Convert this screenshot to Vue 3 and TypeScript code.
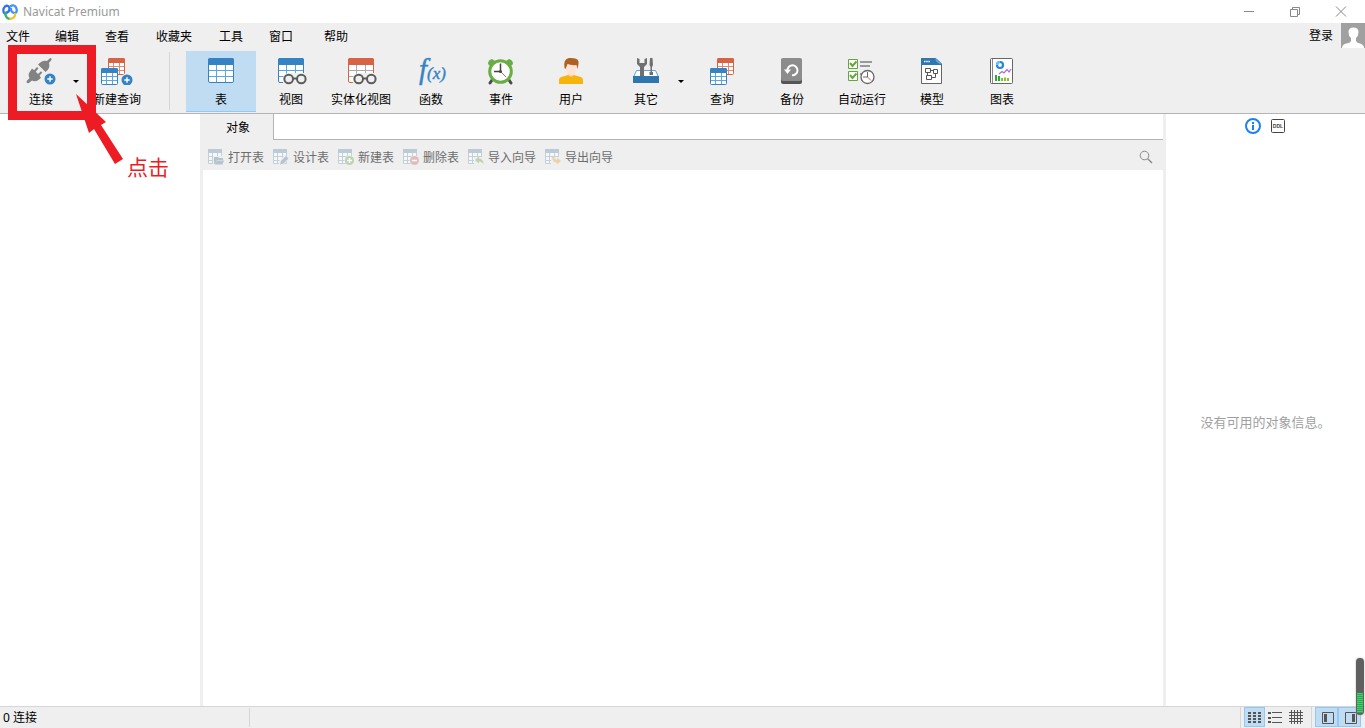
<script setup lang="ts">
import { ref } from 'vue'

interface Tool {
  id: string
  label: string
  more?: boolean
}

const menus: string[] = ['文件', '编辑', '查看', '收藏夹', '工具', '窗口', '帮助']

const createTools: Tool[] = [
  { id: 'connect', label: '连接', more: true },
  { id: 'new-query', label: '新建查询' },
]

const objectTools: Tool[] = [
  { id: 'table', label: '表' },
  { id: 'view', label: '视图' },
  { id: 'mat-view', label: '实体化视图' },
  { id: 'function', label: '函数' },
  { id: 'event', label: '事件' },
  { id: 'user', label: '用户' },
  { id: 'others', label: '其它', more: true },
  { id: 'query', label: '查询' },
  { id: 'backup', label: '备份' },
  { id: 'automation', label: '自动运行' },
  { id: 'model', label: '模型' },
  { id: 'chart', label: '图表' },
]

const actions: Tool[] = [
  { id: 'open', label: '打开表' },
  { id: 'design', label: '设计表' },
  { id: 'add', label: '新建表' },
  { id: 'remove', label: '删除表' },
  { id: 'import', label: '导入向导' },
  { id: 'export', label: '导出向导' },
]

const active = ref('table')
const layout = ref('small')
const leftPane = ref(true)
const rightPane = ref(true)
</script>

<template>
  <div class="window">
    <svg class="defs" aria-hidden="true">
      <symbol id="sheet" viewBox="0 0 26 25">
        <rect x="0.5" y="0.5" width="25" height="24" rx="1.5" fill="#fff" stroke="currentColor" />
        <path d="M0 7V2Q0 0 2 0H24Q26 0 26 2V7Z" fill="currentColor" />
        <path d="M1 12.5H25M1 18.5H25M8.5 7V24M17.5 7V24" stroke="var(--grid)" fill="none" />
      </symbol>
      <symbol id="mini-sheet" viewBox="0 0 17 17">
        <rect x="0.5" y="0.5" width="16" height="16" rx="1" fill="#fff" stroke="currentColor" />
        <path d="M0 5V1.5Q0 0 1.5 0H15.5Q17 0 17 1.5V5Z" fill="currentColor" />
        <path d="M1 8.5H16M1 12.5H16M5.5 5V16M11.5 5V16" stroke="var(--grid)" fill="none" />
      </symbol>
      <symbol id="glasses" viewBox="0 0 32 28">
        <path d="M8 28V22Q8 16 14 16H32V28Z" fill="#efefef" />
        <g fill="#efefef" stroke="#5c5c5c" stroke-width="2">
          <circle cx="13.7" cy="22" r="4.3" />
          <circle cx="26.3" cy="22" r="4.3" />
          <path d="M18 21.5H22" />
        </g>
      </symbol>
      <symbol id="plus" viewBox="0 0 12 12">
        <circle cx="6" cy="6" r="5.5" fill="#3583c2" />
        <path d="M6 3.3V8.7M3.3 6H8.7" stroke="#fff" stroke-width="1.4" />
      </symbol>

      <symbol id="connect" viewBox="0 0 32 28">
        <g fill="#828282">
          <path d="M13 7.5C16 4 19 3 22 4L25.2 1Q27 1.2 26.6 2.8L24 6C25 10 24 12.5 20.5 15Z" />
          <path d="M5 14.5L7 11.5L9 13.2L12 10L13.5 11.3L10.8 14.7L13 17L16 14.2L17.3 15.6L14.5 18.8L16 20.5C13.5 24 10 25 7 23.5L3.5 26.3Q1.2 26.5 1.5 24.3L4.5 21C3 18.5 3.5 16.5 5 14.5Z" />
        </g>
        <use href="#plus" x="19" y="16" width="12" height="12" />
      </symbol>
      <symbol id="new-query" viewBox="0 0 32 28">
        <use href="#mini-sheet" class="red" x="7" y="1" width="17" height="17" />
        <use href="#mini-sheet" class="blue" x="0" y="11" width="17" height="17" />
        <circle cx="26" cy="23" r="6.5" fill="#efefef" />
        <use href="#plus" x="20" y="17" width="12" height="12" />
      </symbol>
      <symbol id="table" viewBox="0 0 32 28">
        <use href="#sheet" class="blue" x="3" y="1" width="26" height="25" />
      </symbol>
      <symbol id="view" viewBox="0 0 32 28">
        <use href="#sheet" class="blue" x="3" y="1" width="26" height="25" />
        <use href="#glasses" width="32" height="28" />
      </symbol>
      <symbol id="mat-view" viewBox="0 0 32 28">
        <use href="#sheet" class="red gray-grid" x="3" y="1" width="26" height="25" />
        <use href="#glasses" width="32" height="28" />
      </symbol>
      <symbol id="event" viewBox="0 0 32 28">
        <path d="M3 7Q3 3 7 2L10 4L5 9ZM28 7Q28 3 24 2L21 4L26 9Z" fill="#69ad45" />
        <path d="M7 23L5 26M24 23L26 26" stroke="#4b4b4b" stroke-width="3" stroke-linecap="round" />
        <circle cx="15.5" cy="14.5" r="10.8" fill="#fff" stroke="#69ad45" stroke-width="3" />
        <path d="M15.5 6.5V14.5H9" fill="none" stroke="#444" stroke-width="1.5" />
        <path d="M15.5 14.5L21 20" stroke="#e8553c" />
        <circle cx="15.5" cy="14.5" r="1.5" fill="#444" />
      </symbol>
      <symbol id="user" viewBox="0 0 32 28">
        <path d="M4 27V23Q4 20 8 19.5L13 18H19L24 19.5Q28 20 28 23V27Z" fill="#f6b50b" />
        <path d="M13 14H19V18Q16 21 13 18Z" fill="#f7d3c0" />
        <path d="M10.500 6H22V11Q21 18 16.500 18Q11 18 10.500 11Z" fill="#ffe4d6" />
        <path d="M9.500 11Q8 2 14 1Q25 0 23.500 7L22.500 12L21.500 8Q16 8.500 12.500 7L10.500 12Z" fill="#ad6224" />
      </symbol>
      <symbol id="others" viewBox="0 0 32 28">
        <path d="M6.5 13.5H25.5L28.5 20H3.5Z" fill="#fff" stroke="#58a7e3" />
        <path d="M7 1V7L10 10V19H14V10L17 7V1L14.500 2V6H9.500V2Z" fill="#707070" />
        <path d="M20 1H22.500L23 8L22 10V15H23V18H19.500V15H20.500V10L19.500 8Z" fill="#707070" />
        <path d="M3 19H29V26H3Z" fill="#2f75ae" />
      </symbol>
      <symbol id="query" viewBox="0 0 32 28">
        <use href="#mini-sheet" class="red" x="11" y="1" width="17" height="17" />
        <use href="#mini-sheet" class="blue" x="4" y="11" width="17" height="17" />
      </symbol>
      <symbol id="backup" viewBox="0 0 32 28">
        <rect x="5" y="2" width="21" height="25" rx="2" fill="#555" />
        <rect x="5" y="1" width="21" height="23" rx="2" fill="#8c8c8c" />
        <path d="M11.5 14A5 5 0 1 1 16 18.3" fill="none" stroke="#fff" stroke-width="2" />
        <path d="M8 12.5L11.5 17L15 12.5Z" fill="#fff" />
      </symbol>
      <symbol id="automation" viewBox="0 0 32 28">
        <path d="M14 5H26M14 9H24M14 17H18" stroke="#999" stroke-width="2" />
        <path d="M2.5 2.5H11.5V11.5H2.5ZM2.5 14.5H11.5V23.5H2.5Z" fill="#fff" stroke="#64a53e" />
        <path d="M4 6L6.500 9L10.500 4.500M4 18L6.500 21L10.500 16.500" fill="none" stroke="#64a53e" stroke-width="2" />
        <circle cx="21.5" cy="20" r="6.5" fill="#fff" stroke="#666" stroke-width="1.3" />
        <path d="M21.5 15V20H17" fill="none" stroke="#666" />
        <path d="M21.5 20L25 23.5" stroke="#e8553c" />
      </symbol>
      <symbol id="model" viewBox="0 0 32 28">
        <path d="M5.5 1.5H20L25.5 7V26.5H5.5Z" fill="#fff" stroke="#666" />
        <path d="M5 1H19L26 7V8H5Z" fill="#2f75ae" />
        <path d="M19 1L26 7Q20 7 19 1Z" fill="#58a7e3" />
        <path d="M8 4.5H14" stroke="#fff" stroke-width="1.5" stroke-dasharray="1.5 0.7" />
        <path d="M9.500 11.500H14.500V15.500H9.500ZM17.500 12.500H21.500V16.500H17.500ZM10.500 18.500H15.500V22.500H10.500ZM14.500 13.500H17.500M19.500 16.500V20.500H15.500M11.500 15.500V18" fill="none" stroke="#555" />
      </symbol>
      <symbol id="chart" viewBox="0 0 32 28">
        <rect x="4.5" y="1.5" width="22" height="25" rx="1" fill="#fff" stroke="#666" />
        <path d="M6.5 2V26" stroke="#888" />
        <circle cx="14" cy="8" r="3" fill="none" stroke="#2386d8" stroke-width="2.2" />
        <path d="M11 8A3 3 0 0 1 14 5" fill="none" stroke="#69c5f5" stroke-width="2.2" />
        <path d="M13 17L16 14.5L18 16L21 12.5L23 15L25 12" fill="none" stroke="#b568d4" stroke-width="1.2" />
        <path d="M10 24V18M13 24V19" stroke="#2da83b" stroke-width="2" />
        <path d="M16 24V21M19 24V20.5M22 24V21" stroke="#80c627" stroke-width="2" />
      </symbol>

      <symbol id="faint-table" viewBox="0 0 16 16">
        <path d="M0.5 1H13.5V14.5H0.5Z" fill="#f5f7f8" stroke="#c3d0da" />
        <path d="M0 0H14V4H0Z" fill="#bccad5" />
        <path d="M1 7.5H14M1 11.5H14M4.5 4V14M9.5 4V14" stroke="#c3d0da" />
      </symbol>
      <symbol id="open" viewBox="0 0 16 16">
        <use href="#faint-table" width="16" height="16" />
        <path d="M5 7H16V16H5Z" fill="#efefef" />
        <path d="M6 15V8H10L11 9H15V11H9L7 15ZM9 11.5H16L14.5 15.5H7Z" fill="#b5c4cf" />
      </symbol>
      <symbol id="design" viewBox="0 0 16 16">
        <use href="#faint-table" width="16" height="16" />
        <path d="M6 16V12L12 6L16 10L10 16Z" fill="#efefef" />
        <path d="M7 15.5L8 12L13 7L15.5 9.5L10.5 14.5Z" fill="#b5c4cf" />
      </symbol>
      <symbol id="add" viewBox="0 0 16 16">
        <use href="#faint-table" width="16" height="16" />
        <circle cx="11.5" cy="11.5" r="5" fill="#efefef" />
        <circle cx="11.5" cy="11.5" r="4.5" fill="#bed2b2" />
        <path d="M11.5 9V14M9 11.5H14" stroke="#fff" stroke-width="1.5" />
      </symbol>
      <symbol id="remove" viewBox="0 0 16 16">
        <use href="#faint-table" width="16" height="16" />
        <circle cx="11.5" cy="11.5" r="5" fill="#efefef" />
        <circle cx="11.5" cy="11.5" r="4.5" fill="#e2bcbc" />
        <path d="M9 11.5H14" stroke="#fff" stroke-width="1.5" />
      </symbol>
      <symbol id="import" viewBox="0 0 16 16">
        <use href="#faint-table" width="16" height="16" />
        <path d="M6 8H16V16H6Z" fill="#efefef" />
        <path d="M7 11L11 7.5V9.500Q15.500 10 15.500 15.500Q14 12.500 11 12.500V14.500Z" fill="#bdd4ae" />
      </symbol>
      <symbol id="export" viewBox="0 0 16 16">
        <use href="#faint-table" width="16" height="16" />
        <path d="M6 8H16V16H6Z" fill="#efefef" />
        <path d="M16 12L12 8.500V10.800Q9.500 11 9 8H7Q7.500 13.500 12 13.500V15.500Z" fill="#ecd0ac" />
      </symbol>
    </svg>

    <header class="title-bar">
      <svg class="logo" viewBox="0 0 16 16" fill="none" stroke-width="2.3" stroke-linecap="round">
        <path d="M2.800 9.500C0.800 8 0.800 4.500 3 2.500C5 1 7.500 2 7.500 4.500C7.500 7 6 8.500 3.500 8.800" stroke="#2f6ff0" />
        <path d="M8.500 2.300C10 0.800 12.500 1 13.800 3C15.500 6 14.800 8.500 13 9.200C10.500 9 8.800 7 9 4.800" stroke="#3f95f7" />
        <path d="M3.500 9Q3 12 5 13.700Q6.500 14.800 8.200 14.800" stroke="#37b36a" />
        <path d="M8.200 14.800Q12 14.500 13 11.500V10" stroke="#f5c331" />
      </svg>
      <h1>Navicat Premium</h1>
      <button type="button" aria-label="最小化">
        <svg viewBox="0 0 12 12"><path d="M1 5.5H11" /></svg>
      </button>
      <button type="button" aria-label="还原">
        <svg viewBox="0 0 12 12"><path d="M1.5 3.5H8.5V10.5H1.5ZM3.5 3V1.5H10.5V8.5H9" /></svg>
      </button>
      <button type="button" aria-label="关闭">
        <svg viewBox="0 0 12 12"><path d="M1 0.5L11 10.5M11 0.5L1 10.5" /></svg>
      </button>
    </header>

    <div class="menu-row">
      <nav class="menu-bar">
        <button v-for="menu in menus" :key="menu" type="button">{{ menu }}</button>
      </nav>
      <button type="button" class="login">
        <span>登录</span>
        <svg viewBox="0 0 24 25">
          <path d="M0 0H24V25H0Z" fill="#a0a0a0" />
          <path d="M7.500 9Q7.500 4.500 12.500 4.500Q17.500 4.500 17.500 9Q17.500 13 15 15V18Q16 20 19 20.500Q23 21.500 23 25H1Q1 21.500 5 20.500Q9 20 10 18V15Q7.500 13 7.500 9Z" fill="#fff" />
        </svg>
      </button>
    </div>

    <div class="toolbar">
      <button v-for="tool in createTools" :key="tool.id" type="button" class="tool" :class="{ wide: tool.more }">
        <svg class="tool-icon"><use :href="'#' + tool.id" /></svg>
        <span>{{ tool.label }}</span>
        <i v-if="tool.more" class="caret"></i>
      </button>
      <div class="divider"></div>
      <button
        v-for="tool in objectTools"
        :key="tool.id"
        type="button"
        class="tool"
        :class="{ wide: tool.more, active: active === tool.id }"
        @click="active = tool.id"
      >
        <svg v-if="tool.id === 'function'" class="tool-icon formula" viewBox="0 0 32 28">
          <text x="4" y="22"><tspan font-size="29">f</tspan><tspan font-size="17">(x)</tspan></text>
        </svg>
        <svg v-else class="tool-icon"><use :href="'#' + tool.id" /></svg>
        <span>{{ tool.label }}</span>
        <i v-if="tool.more" class="caret"></i>
      </button>
    </div>

    <main class="workspace">
      <aside class="connections"></aside>
      <section class="objects">
        <div class="tabs">
          <button type="button" class="tab">对象</button>
          <div class="tab-space"></div>
        </div>
        <div class="actions">
          <button v-for="action in actions" :key="action.id" type="button" disabled>
            <svg><use :href="'#' + action.id" /></svg>
            <span>{{ action.label }}</span>
          </button>
          <button type="button" class="search" aria-label="搜索">
            <svg viewBox="0 0 16 16" fill="none" stroke="#888">
              <circle cx="6.5" cy="6.5" r="4.3" />
              <path d="M9.700 9.700L14 14" stroke-width="1.4" />
            </svg>
          </button>
        </div>
        <div class="object-list"></div>
      </section>
      <aside class="info">
        <div class="info-tabs">
          <button type="button" aria-label="信息">
            <svg viewBox="0 0 16 16">
              <circle cx="8" cy="8" r="7" fill="none" stroke="#1a80f5" stroke-width="2" />
              <path d="M8 4V6M8 7V12" stroke="#1a80f5" stroke-width="2" />
            </svg>
          </button>
          <button type="button" aria-label="DDL">
            <svg viewBox="0 0 16 16">
              <rect x="1.5" y="1.5" width="13" height="13" rx="1" fill="none" stroke="#444" />
              <text x="8" y="10" text-anchor="middle" class="ddl">DDL</text>
            </svg>
          </button>
        </div>
        <p>没有可用的对象信息。</p>
      </aside>
    </main>

    <footer class="status">
      <span class="count">0 连接</span>
      <div class="layout-group">
        <button type="button" aria-label="小图标" :class="{ on: layout === 'small' }" @click="layout = 'small'">
          <svg viewBox="0 0 16 16"><path d="M1 4H14M1 7H14M1 10H14M1 13H14" stroke-width="2" stroke-dasharray="3 2" /></svg>
        </button>
        <button type="button" aria-label="列表" :class="{ on: layout === 'list' }" @click="layout = 'list'">
          <svg viewBox="0 0 16 16"><path d="M0 4H3M0 9H3M0 13H3" stroke-width="2" /><path d="M4 3.5H14M4 8.5H14M4 13.5H14" /></svg>
        </button>
        <button type="button" aria-label="网格" :class="{ on: layout === 'grid' }" @click="layout = 'grid'">
          <svg viewBox="0 0 16 16"><path d="M0 3.5H14M0 6.5H14M0 9.5H14M0 12.5H14M2.5 1V15M5.5 1V15M8.5 1V15M11.5 1V15" /></svg>
        </button>
      </div>
      <div class="pane-group">
        <button type="button" aria-label="左侧窗格" :class="{ on: leftPane }" @click="leftPane = !leftPane">
          <svg viewBox="0 0 16 16"><path d="M2.5 3.5H13.5V14.5H2.5Z" /><path d="M5.5 5V13" stroke-width="3" /></svg>
        </button>
        <button type="button" aria-label="右侧窗格" :class="{ on: rightPane }" @click="rightPane = !rightPane">
          <svg viewBox="0 0 16 16"><path d="M2.5 3.5H13.5V14.5H2.5Z" /><path d="M10.5 5V13" stroke-width="3" /></svg>
        </button>
      </div>
    </footer>

    <div class="meter"><div class="level"></div></div>

    <div class="callout-frame"></div>
    <svg class="callout-arrow" viewBox="0 0 48 72">
      <path d="M0 0L30 28L25 31L47 65L39 70L18 35L13 39Z" fill="#ed1c24" />
    </svg>
    <div class="callout-text">点击</div>
  </div>
</template>

<style>
body {
  margin: 0;
  background: #fff;
}
</style>

<style scoped>
.window {
  position: relative;
  display: flex;
  flex-direction: column;
  height: 100vh;
  overflow: hidden;
  background: #efefef;
  color: #000;
  font: 12px/16px "Noto Sans", "Noto Sans CJK SC", sans-serif;
}

button {
  padding: 0;
  border: 0;
  background: none;
  color: inherit;
  font: inherit;
  white-space: nowrap;
}

svg {
  display: block;
}

.defs {
  position: absolute;
  width: 0;
  height: 0;
}

.blue {
  color: #3583c2;
  --grid: #58a7e3;
}

.red {
  color: #d86344;
  --grid: #e58a72;
}

.gray-grid {
  --grid: #aaa;
}

.formula {
  overflow: visible;
  fill: #3583c2;
  stroke: #3583c2;
  stroke-width: 0.4px;
  font-family: "Liberation Serif", serif;
  font-style: italic;
}

.title-bar {
  display: flex;
  align-items: center;
  height: 23px;
  padding: 0 1px 0 2px;
  background: #fff;
}

.logo {
  width: 16px;
  height: 16px;
}

h1 {
  flex: 1;
  margin: 0 0 0 5px;
  color: #999;
  font-size: 12px;
  font-weight: 400;
}

.title-bar button {
  display: grid;
  place-items: center;
  width: 46px;
  height: 22px;
}

.title-bar button svg {
  width: 12px;
  height: 12px;
  fill: none;
  stroke: #888;
}

.menu-row {
  display: flex;
  justify-content: space-between;
  height: 28px;
}

.menu-bar {
  display: grid;
  grid-template-columns: 49px 50px 51px 63px 50px 55px auto;
  height: 28px;
  padding-left: 6px;
}

.menu-bar button {
  text-align: left;
}

.login {
  display: flex;
  align-items: center;
  gap: 8px;
  height: 25px;
}

.login svg {
  width: 24px;
  height: 25px;
}

.toolbar {
  display: flex;
  height: 62px;
  padding-left: 1px;
  border-bottom: 1px solid #b4b4b4;
}

.tool {
  position: relative;
  display: flex;
  flex-direction: column;
  align-items: center;
  gap: 7px;
  width: 70px;
  height: 61px;
  padding-top: 6px;
  box-sizing: border-box;
  border-bottom: 1px solid transparent;
}

.tool.wide {
  width: 80px;
}

.tool.wide + .tool {
  margin-left: 1px;
}

.tool.active {
  border-bottom-color: #90c8f6;
  background: #c0dcf3;
}

.tool-icon {
  width: 32px;
  height: 28px;
}

.caret {
  position: absolute;
  top: 29px;
  right: 2px;
  border: 3px solid transparent;
  border-top-color: #000;
  border-bottom: 0;
}

.divider {
  width: 1px;
  height: 58px;
  margin: 1px 16px 0 17px;
  background: #d6d6d6;
}

.workspace {
  flex: 1;
  display: flex;
  min-height: 0;
}

.connections {
  width: 200px;
  background: #fff;
}

.objects {
  flex: 1;
  display: flex;
  flex-direction: column;
}

.tabs {
  display: flex;
  height: 26px;
}

.tab {
  width: 73px;
  padding: 1px 0 0 3px;
}

.tab-space {
  flex: 1;
  margin-right: 3px;
  border-left: 1px solid #b4b4b4;
  border-bottom: 1px solid #b4b4b4;
  background: #fff;
}

.actions {
  display: flex;
  align-items: center;
  gap: 9px;
  height: 30px;
  padding: 4px 12px 0 8px;
  box-sizing: border-box;
}

.actions button {
  display: flex;
  align-items: center;
  gap: 4px;
  color: #6d6d6d;
}

.actions span {
  padding-top: 2px;
}

.actions svg {
  width: 16px;
  height: 16px;
}

.actions .search {
  margin-left: auto;
}

.object-list {
  flex: 1;
  margin: 0 3px;
  background: #fff;
}

.info {
  display: flex;
  flex-direction: column;
  width: 199px;
  background: #fff;
}

.info-tabs {
  display: flex;
  justify-content: center;
  gap: 9px;
  height: 26px;
  padding-top: 4px;
  box-sizing: border-box;
}

.info-tabs button {
  height: 16px;
}

.info-tabs svg {
  width: 16px;
  height: 16px;
}

.ddl {
  fill: #444;
  font: bold 5px "Liberation Sans", sans-serif;
}

.info p {
  display: grid;
  flex: 1;
  place-items: center;
  margin: 0 0 2px;
  color: #a0a0a0;
  font-size: 13px;
}

.status {
  display: flex;
  height: 21px;
  border-top: 1px solid #d6d6d6;
}

.count {
  flex: none;
  width: 246px;
  height: 19px;
  margin-top: 1px;
  padding-left: 3px;
  border-right: 1px solid #d6d6d6;
  line-height: 20px;
}

.layout-group,
.pane-group {
  display: flex;
  height: 21px;
  padding-left: 3px;
  border-left: 1px solid #d6d6d6;
}

.layout-group {
  margin-left: auto;
  padding-right: 4px;
}

.pane-group {
  padding-right: 4px;
}

.status button {
  display: grid;
  place-items: center start;
  width: 21px;
  height: 20px;
  padding-left: 2px;
  box-sizing: border-box;
  border: 1px solid transparent;
}

.status .pane-group button {
  width: 23px;
  padding-left: 4px;
}

.status button.on {
  border-color: #90c8f6;
  background: #c0dcf3;
}

.status svg {
  width: 16px;
  height: 16px;
  fill: none;
  stroke: #555;
}

.meter {
  position: absolute;
  right: 1px;
  bottom: 13px;
  display: flex;
  flex-direction: column;
  justify-content: flex-end;
  width: 8px;
  height: 57px;
  border-radius: 4px;
  box-sizing: border-box;
  padding: 0 1px 2px;
  background: #606060;
  box-shadow: 0 0 2px #aaa;
}

.level {
  height: 20px;
  background: repeating-linear-gradient(#2fdc64 0 1px, #3f9a5c 1px 2px);
}

.callout-frame {
  position: absolute;
  top: 45px;
  left: 8px;
  width: 88px;
  height: 75px;
  box-sizing: border-box;
  border: 9px solid #ed1c24;
  pointer-events: none;
}

.callout-arrow {
  position: absolute;
  top: 94px;
  left: 76px;
  width: 48px;
  height: 72px;
  pointer-events: none;
}

.callout-text {
  position: absolute;
  top: 155px;
  left: 127px;
  color: #ed1c24;
  font-size: 21px;
  line-height: 24px;
}
</style>
